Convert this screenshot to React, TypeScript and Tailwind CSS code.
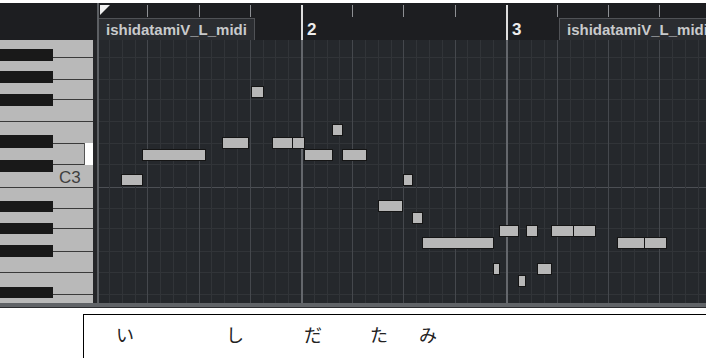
import React from "react";

// piano roll: x in page px, p = semitones above C3
const notes: [number, number, number][] = [
  [121, 142, 0],
  [142, 205, 2],
  [222, 248, 3],
  [251, 263, 7],
  [272, 292, 3],
  [292, 304, 3],
  [304, 332, 2],
  [332, 342, 4],
  [342, 366, 2],
  [378, 402, -2],
  [403, 412, 0],
  [412, 422, -3],
  [422, 493, -5],
  [493, 499, -7],
  [499, 518, -4],
  [518, 525, -8],
  [526, 537, -4],
  [537, 551, -7],
  [551, 573, -4],
  [573, 595, -4],
  [617, 644, -5],
  [644, 666, -5],
];

const keyLines = [17, 39, 59, 81, 103, 124, 147, 168, 188, 211, 232, 254];
const fullLines = [81, 147, 232];
const blackKeys: [number, number][] = [
  [9, 12],
  [31, 12],
  [54, 12],
  [95, 13],
  [120, 12],
  [161, 11],
  [183, 11],
  [205, 12],
  [247, 11],
];

const lyrics: [string, number][] = [
  ["い", 32],
  ["し", 92],
  ["だ", 60],
  ["た", 48],
  ["み", 31],
];

function Keyboard() {
  return (
    <div className="relative w-[93px] h-full bg-[#b9b9b9] overflow-hidden">
      {keyLines.map((y) => (
        <div
          key={y}
          className={`absolute right-0 h-px bg-[#3a3a3a] ${fullLines.includes(y) ? "left-0" : "left-[52px]"}`}
          style={{ top: y }}
        />
      ))}
      {blackKeys.map(([y, h]) => (
        <div key={y} className="absolute left-0 w-[53px] bg-[#191919]" style={{ top: y, height: h }} />
      ))}
      <div className="absolute left-[84px] top-[103px] w-[10px] h-[22px] bg-white border-l border-[#555]" />
      <span className="absolute left-[59px] top-[129px] text-[17px] leading-[17px] text-[#3f3f3f]">C3</span>
    </div>
  );
}

function Label() {
  return (
    <span className="block text-[15px] leading-[15px] font-bold text-[#c9cacc] whitespace-nowrap">
      ishidatamiV_L_midi
    </span>
  );
}

function Ruler() {
  const ticks = [1, 2, 3, 5, 6, 7, 9, 10, 11];
  return (
    <div className="relative h-[37px] bg-[#1d1e21] overflow-hidden flex flex-col">
      <div className="relative h-[15px]">
        <svg className="absolute left-[1px] top-[2px]" width="10" height="10" viewBox="0 0 10 10">
          <polygon points="0,0 10,0 0,10" fill="#f0f0f0" />
        </svg>
        {ticks.map((j) => (
          <div
            key={j}
            className="absolute top-[2px] w-px h-[12px] bg-[#8e9094]"
            style={{ left: Math.floor(-2.3 + 51.2 * j) }}
          />
        ))}
      </div>
      <div className="flex h-[22px]">
        <div className="w-[156px] shrink-0 bg-[#2b2d31] border-t border-r border-[#505256] pl-[7px] pt-[3px]">
          <Label />
        </div>
        <div className="w-[304px] shrink-0" />
        <div className="flex-1 min-w-[160px] bg-[#2b2d31] border-t border-l border-[#505256] pl-[7px] pt-[3px]">
          <Label />
        </div>
      </div>
      <div className="absolute left-[202px] top-[2px] w-[2px] h-[35px] bg-[#dedede]" />
      <div className="absolute left-[407px] top-[2px] w-[2px] h-[35px] bg-[#dedede]" />
      <span className="absolute left-[208px] top-[18px] text-[17px] leading-[17px] font-bold text-[#ececec]">2</span>
      <span className="absolute left-[413px] top-[18px] text-[17px] leading-[17px] font-bold text-[#ececec]">3</span>
    </div>
  );
}

function Grid() {
  const cols = Array.from({ length: 48 }, (_, i) => i + 1);
  return (
    <div className="relative flex-1 bg-[#25282c] overflow-hidden">
      {keyLines.map((y) => (
        <div
          key={y}
          className={`absolute left-0 right-0 h-px ${y === 147 ? "bg-[#4c4f54]" : "bg-[#313438]"}`}
          style={{ top: y }}
        />
      ))}
      {cols.map((k) => (
        <div
          key={k}
          className={`absolute top-0 bottom-0 ${
            k % 16 === 0 ? "w-[2px] bg-[#64676c]" : k % 4 === 0 ? "w-px bg-[#45484d]" : "w-px bg-[#313438]"
          }`}
          style={{ left: Math.floor(-2.3 + 12.8 * k) }}
        />
      ))}
      {notes.map(([x1, x2, p], i) => (
        <div
          key={i}
          className="absolute h-[12px] bg-[#b7b7b7] border border-[#151515]"
          style={{ left: x1 - 99, width: x2 - x1 + 1, top: Math.round(134.3 - 12.6 * p) }}
        />
      ))}
    </div>
  );
}

export default function App() {
  return (
    <div className="w-[706px] h-[358px] bg-white overflow-hidden flex flex-col font-['Liberation_Sans',Arial,sans-serif]">
      <div className="h-[3px] bg-white" />
      <div className="flex h-[300px]">
        <div className="w-[97px] flex flex-col">
          <div className="h-[37px] bg-[#1d1e21]" />
          <div className="flex flex-1">
            <Keyboard />
            <div className="w-[4px] bg-[#252629]" />
          </div>
        </div>
        <div className="w-[2px] bg-[#5c5f63]" />
        <div className="flex-1 flex flex-col min-w-0">
          <Ruler />
          <Grid />
        </div>
      </div>
      <div className="h-[4px] bg-[#606367]" />
      <div className="h-px bg-[#2a2b2e]" />
      <div className="flex-1 pt-[6px] pl-[83px] flex flex-col">
        <div className="flex-1 border-t border-l border-black pt-[10px] flex font-['Noto_Sans_CJK_JP',sans-serif] text-[18px] leading-[18px] text-[#222]">
          {lyrics.map(([c, ml]) => (
            <span key={c} className="w-[18px]" style={{ marginLeft: ml }}>
              {c}
            </span>
          ))}
        </div>
      </div>
    </div>
  );
}
